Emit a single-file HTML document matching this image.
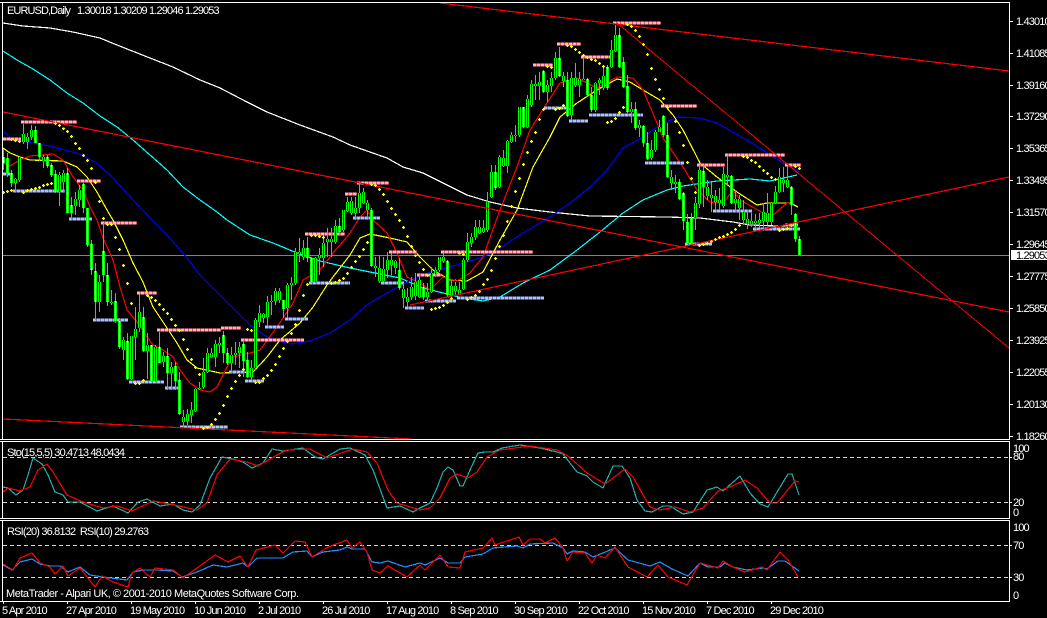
<!DOCTYPE html>
<html><head><meta charset="utf-8"><title>EURUSD,Daily</title>
<style>
html,body{margin:0;padding:0;background:#000;overflow:hidden}
svg{display:block}
text{font-family:"Liberation Sans",sans-serif;font-size:11px;fill:#fff;letter-spacing:-.85px}
.l{fill:none;stroke-width:1.2;shape-rendering:crispEdges;stroke-linejoin:round}
</style></head><body>
<svg width="1047" height="618" viewBox="0 0 1047 618" xmlns="http://www.w3.org/2000/svg">
<defs>
<clipPath id="m"><rect x="3" y="3" width="1006" height="436"/></clipPath>
<path id="bd" d="M3 157V163M7 158V173M11 173V183M35 130V143M39 143V157M47 157V166M51 165V175M55 174V192M67 173V213M71 205V213M83 184V208M87 208V245M91 244V270M95 271V302M103 251V275M107 275V302M115 301V321M119 321V347M127 341V379M143 317V351M151 345V381M159 347V363M167 356V373M175 366V381M179 380V414M223 335V353M227 353V363M243 344V361M247 360V377M283 300V309M307 248V258M311 258V282M339 226V232M371 210V266M399 270V288M423 287V297M447 261V295M495 172V188M523 107V127M543 71V92M559 58V76M567 80V116M587 79V95M591 95V110M607 67V88M619 35V67M623 62V87M627 86V112M635 109V128M643 126V143M647 143V159M663 116V135M667 135V177M679 182V199M683 193V221M687 222V243M691 218V243M703 171V187M731 176V203M791 187V205M795 214V239M799 239V255"/>
<path id="bu" d="M15 179V183M19 157V180M23 134V142M27 137V142M31 130V137M43 157V161M59 175V192M63 173V182M75 199V206M79 190V200M99 282V302M111 302V303M123 340V350M131 336V379M135 329V337M139 312V328M147 345V351M155 347V381M163 356V362M171 367V373M183 417V422M187 414V421M191 410V415M195 389V411M199 388V389M203 372V387M207 353V372M211 353V357M215 344V357M219 343V345M231 355V363M235 353V355M239 347V353M251 368V377M255 320V368M259 313V322M263 314V318M267 302V317M271 301V302M275 291V301M279 291V300M287 285V308M291 283V285M295 252V283M299 252V254M303 248V257M315 258V282M319 255V258M323 243V258M327 239V242M331 239V242M335 226V242M343 210V230M347 202V211M351 201V213M355 208V213M359 193V208M363 192V203M367 203V210M375 266V268M379 268V281M383 269V281M387 260V270M391 260V265M395 261V268M403 289V298M407 297V302M411 287V297M415 282V296M419 280V297M427 292V297M431 273V292M435 270V274M439 257V270M443 257V261M451 286V295M455 286V291M459 290V294M463 260V289M467 242V260M471 237V243M475 227V237M479 227V233M483 228V232M487 202V230M491 172V197M499 157V187M503 158V166M507 141V166M511 135V142M515 135V136M519 107V135M527 99V127M531 84V105M535 84V86M539 82V86M547 85V92M551 78V86M555 58V78M563 76V81M571 78V115M575 78V85M579 79V85M583 79V80M595 83V110M599 80V83M603 76V88M611 50V67M615 35V51M631 109V112M639 125V128M651 150V158M655 132V150M659 127V132M671 177V183M675 182V184M695 203V218M699 170V204M707 187V196M711 195V198M715 196V202M719 200V203M723 174V206M727 175V177M735 199V203M739 199V208M743 212V220M747 219V224M751 221V224M755 221V223M759 220V223M763 212V221M767 213V222M771 203V222M775 192V203M779 177V192M783 180V183M787 180V187"/>
<path id="pk" d="M3 139H21M21 122H77M77 181H101M101 223H137M137 293H157M157 330H221M221 328H241M241 340H304M305 234H345M345 194H357M357 183H389M389 252H417M417 275H441M441 252H533M533 65H553M557 44H581M581 57H610M613 23H661M661 106H697M697 165H725M725 155H785M785 165H801M785 225H798"/>
<path id="lv" d="M3 174H10M13 191H65M69 219H92M93 320H128M129 382H164M165 388H178M180 427H228M229 372H245M245 381H264M265 327H284M285 319H308M309 283H350M353 218H380M381 283H404M405 308H424M425 301H456M457 298H544M544 108H567M569 121H588M589 115H643M645 163H684M685 244H712M713 211H752M753 229H800"/>
</defs>
<rect width="1047" height="618" fill="#000"/>

<!-- frames -->
<g fill="none" stroke="#fff" stroke-width="1" shape-rendering="crispEdges">
<path d="M0 2.5H1009.5V439.5H0M2.5 2V439"/>
<path d="M0 441.5H1009.5V518.5H0M2.5 441V518"/>
<path d="M0 520.5H1009.5V601.5H0M2.5 520V601"/>
<path d="M1009 21.5h4M1009 53.5h4M1009 85.5h4M1009 116.5h4M1009 148.5h4M1009 180.5h4M1009 212.5h4M1009 244.5h4M1009 276.5h4M1009 308.5h4M1009 340.5h4M1009 372.5h4M1009 404.5h4M1009 436.5h4M1009 457.5h3M1009 502.5h3M1009 545.5h3M1009 577.5h3"/>
<path d="M3.5 601v3M67.5 601v3M131.5 601v3M195.5 601v3M259.5 601v3M323.5 601v3M387.5 601v3M451.5 601v3M515.5 601v3M579.5 601v3M643.5 601v3M707.5 601v3M771.5 601v3"/>
</g>

<g clip-path="url(#m)">
<!-- current price line -->
<path d="M3 255.5H1009" stroke="#808080" stroke-width="1" shape-rendering="crispEdges"/>
<!-- MAs -->
<polyline class="l" stroke="#fff" points="3,23 23,26 50,28 73,32 100,38 117,45 150,58 173,67 200,80 220,88 247,102 267,112 300,125 333,137 350,145 367,151 387,158 403,167 423,173 447,185 467,195 490,202 517,208 550,212 590,216 667,217 700,218 733,222 750,225 777,226 797,226"/>
<polyline class="l" stroke="#0ff" points="3,51 17,60 33,69 50,80 67,93 83,103 100,116 117,127 133,140 150,155 167,170 183,187 200,200 217,212 227,220 250,235 273,243 297,253 320,261 350,268 370,272 400,278 423,288 443,293 463,298 483,301 500,297 523,283 550,270 577,250 600,232 623,213 643,200 667,190 683,186 717,181 750,179 770,181 797,175"/>
<polyline class="l" stroke="#0000ff" points="3,131 13,140 33,143 50,146 80,154 97,163 113,178 133,200 152,220 167,235 183,253 200,275 217,292 233,308 250,325 267,337 290,344 310,341 330,333 350,320 367,305 387,293 407,282 430,272 457,265 483,257 500,248 523,233 550,217 570,203 590,187 607,170 623,148 643,137 657,127 677,117 700,118 717,123 750,142 783,163 799,171"/>
<polyline class="l" stroke="#ff0" points="3,148 10,153 20,157 30,160 63,161 77,167 87,177 97,192 107,210 113,220 123,240 133,263 143,282 153,307 167,328 177,343 187,360 197,368 220,373 253,372 267,357 280,340 300,323 313,307 327,285 333,277 350,255 360,238 370,234 390,238 407,242 420,257 433,270 450,280 467,281 483,272 500,240 517,210 533,167 550,137 560,117 577,103 597,90 617,79 630,82 643,90 660,100 673,115 683,130 700,163 717,177 737,192 757,205 767,203 790,203 798,207"/>
<polyline class="l" stroke="#f00" points="3,163 10,166 20,160 30,156 40,155 53,154 63,160 73,177 83,190 90,207 97,220 103,238 113,260 120,287 127,310 137,322 147,337 153,345 163,350 173,357 180,370 190,383 200,390 210,392 217,387 227,367 233,357 250,353 260,350 277,327 293,303 303,280 320,270 333,253 347,237 350,233 360,217 367,210 373,220 387,233 397,253 407,277 420,283 430,290 443,277 457,281 470,273 483,257 500,210 517,167 530,130 547,103 560,83 577,78 597,88 617,77 633,78 643,90 657,123 663,138 683,167 697,190 710,202 723,203 733,190 740,200 763,213 773,215 787,203 792,202"/>
<!-- S/R bars -->
<use href="#pk" fill="none" stroke="#f0506a" stroke-width="3" shape-rendering="crispEdges"/>
<use href="#pk" fill="none" stroke="#ffb6c1" stroke-width="3" stroke-dasharray="3 1" shape-rendering="crispEdges"/>
<use href="#lv" fill="none" stroke="#6a78c8" stroke-width="3" shape-rendering="crispEdges"/>
<use href="#lv" fill="none" stroke="#b0c4ee" stroke-width="3" stroke-dasharray="3 1" shape-rendering="crispEdges"/>
<!-- candles -->
<g transform="translate(.5 0)" fill="none" shape-rendering="crispEdges">
<path stroke="#0f0" stroke-width="1" d="M3 149V170M7 153V177M11 170V187M15 178V192M19 156V182M23 124V144M27 133V149M31 125V140M35 126V143M39 143V161M43 155V168M47 155V168M51 163V177M55 170V193M59 172V206M63 170V192M67 168V213M71 197V220M75 192V215M79 185V207M83 183V213M87 208V247M91 240V275M95 263V320M99 275V312M103 223V282M107 263V306M111 290V305M115 293V323M119 318V349M123 337V360M127 333V380M131 336V380M135 307V360M139 294V332M143 307V352M147 333V379M151 345V382M155 345V382M159 332V363M163 352V367M167 348V390M171 362V390M175 362V390M179 372V415M183 410V428M187 409V425M191 402V423M195 388V412M199 382V390M203 358V389M207 348V373M211 348V358M215 340V367M219 337V353M223 331V363M227 348V365M231 347V373M235 342V365M239 342V368M243 340V377M247 352V378M251 360V380M255 318V370M259 305V327M263 313V323M267 296V326M271 295V315M275 288V305M279 288V303M283 300V318M287 283V318M291 277V300M295 248V285M299 238V262M303 240V260M307 237V262M311 257V283M315 257V283M319 248V275M323 235V267M327 228V257M331 228V257M335 220V244M339 218V235M343 210V232M347 197V212M351 197V215M355 197V220M359 183V213M363 188V204M367 200V218M371 208V267M375 257V277M379 256V283M383 257V282M387 252V278M391 253V275M395 260V274M399 258V290M403 283V308M407 288V307M411 277V300M415 273V300M419 273V298M423 283V300M427 283V302M431 267V293M435 267V277M439 257V272M443 253V263M447 260V297M451 280V300M455 282V295M459 282V295M463 258V290M467 233V262M471 233V247M475 220V240M479 220V234M483 220V233M487 192V232M491 165V198M495 165V190M499 155V188M503 150V167M507 140V173M511 132V143M515 125V142M519 107V137M523 107V128M527 95V128M531 80V107M535 75V100M539 72V100M543 70V93M547 80V102M551 72V92M555 52V80M559 47V77M563 72V87M567 72V117M571 72V120M575 63V87M579 72V97M583 57V80M587 78V97M591 87V112M595 82V112M599 78V95M603 65V90M607 65V90M611 40V68M615 25V52M619 28V68M623 57V88M627 75V113M631 102V123M635 102V130M639 120V137M643 125V147M647 132V160M651 140V160M655 130V152M659 120V132M663 115V137M667 123V178M671 170V190M675 175V193M679 179V200M683 192V230M687 214V244M691 213V244M695 197V230M699 165V208M703 165V207M707 180V200M711 182V212M715 190V210M719 188V210M723 167V208M727 155V185M731 175V204M735 190V212M739 195V220M743 200V224M747 210V229M751 213V227M755 214V229M759 213V228M763 203V229M767 193V225M771 202V225M775 186V204M779 168V193M783 167V192M787 166V188M791 186V215M795 213V242M799 236V255"/>
<use href="#bu" stroke="#0f0" stroke-width="3"/>
<use href="#bu" stroke="#000" stroke-width="1"/>
<use href="#bd" stroke="#0f0" stroke-width="3"/>
<use href="#bd" stroke="#f0fff0" stroke-width="1"/>
</g>
<!-- trendlines -->
<g fill="none" stroke="#f00" shape-rendering="crispEdges">
<path stroke-width="1.2" d="M440 3L1009 71"/>
<path stroke-width="1.2" d="M3 112L1009 312"/>
<path stroke-width="1.2" d="M410 305L1009 177"/>
<path stroke-width="1.2" d="M3 419L412 439"/>
<path stroke-width="1" d="M617 23L1009 348"/>
</g>
<!-- SAR -->
<path transform="translate(.5 .5)" fill="none" stroke="#ff0" stroke-width="2.6" stroke-linecap="round" shape-rendering="crispEdges" d="M3 192h0M7 191h0M11 190h0M11 139h0M15 140h0M19 141h0M23 192h0M27 190h0M31 189h0M35 188h0M39 187h0M43 185h0M47 184h0M51 183h0M55 123h0M59 125h0M63 128h0M67 131h0M71 136h0M75 143h0M79 148h0M83 155h0M87 160h0M91 168h0M95 182h0M99 201h0M103 218h0M107 224h0M111 224h0M115 237h0M119 249h0M123 265h0M127 283h0M131 303h0M135 383h0M139 383h0M143 380h0M147 295h0M151 297h0M155 300h0M159 304h0M163 309h0M167 313h0M171 319h0M175 325h0M179 330h0M183 339h0M187 349h0M191 359h0M195 367h0M199 374h0M203 428h0M207 427h0M211 424h0M215 419h0M219 413h0M223 405h0M227 396h0M231 388h0M235 381h0M239 375h0M243 369h0M247 329h0M251 330h0M255 382h0M259 382h0M263 378h0M267 375h0M271 370h0M275 364h0M279 356h0M283 348h0M287 341h0M291 333h0M295 324h0M299 310h0M303 295h0M307 284h0M311 235h0M315 235h0M319 236h0M323 237h0M327 283h0M331 283h0M335 282h0M339 280h0M343 278h0M347 273h0M351 267h0M355 261h0M359 256h0M363 249h0M367 242h0M371 184h0M375 185h0M379 189h0M383 194h0M387 201h0M391 208h0M395 214h0M399 220h0M403 227h0M407 236h0M411 246h0M415 255h0M419 262h0M423 269h0M427 275h0M431 309h0M435 308h0M439 307h0M443 305h0M447 302h0M451 298h0M459 253h0M463 254h0M467 299h0M471 297h0M475 295h0M479 291h0M483 284h0M487 279h0M491 270h0M495 258h0M499 246h0M503 235h0M507 221h0M511 206h0M515 191h0M519 178h0M523 164h0M527 152h0M531 141h0M535 132h0M539 119h0M543 109h0M547 66h0M551 67h0M555 109h0M559 108h0M563 105h0M567 45h0M571 46h0M575 49h0M579 52h0M583 55h0M587 57h0M591 59h0M595 60h0M599 63h0M603 66h0M607 122h0M611 121h0M615 118h0M619 112h0M623 107h0M627 24h0M631 26h0M635 30h0M639 36h0M643 44h0M647 54h0M651 68h0M655 79h0M659 89h0M663 98h0M667 107h0M675 121h0M679 132h0M683 145h0M687 162h0M691 178h0M695 192h0M699 245h0M703 244h0M707 243h0M711 241h0M715 239h0M719 237h0M723 236h0M727 234h0M731 232h0M735 229h0M739 225h0M743 156h0M747 157h0M751 160h0M755 162h0M759 166h0M763 170h0M767 173h0M771 177h0M775 179h0M779 230h0M783 229h0M787 228h0M791 225h0M795 166h0M799 168h0"/>
</g>

<!-- indicator levels -->
<g stroke="#d8d8d8" stroke-width="1" stroke-dasharray="4 3" shape-rendering="crispEdges">
<path d="M3 457.5H1009M3 502.5H1009M3 545.5H1009M3 577.5H1009"/>
</g>
<!-- Stochastic -->
<polyline class="l" stroke="#20b2aa" points="3,487 8,488 16,495 23,490 28,475 33,458 42,464 48,475 55,492 63,495 68,502 80,502 97,511 113,506 128,513 138,502 147,499 160,506 173,504 183,510 192,512 200,505 210,478 222,457 233,459 243,462 252,468 263,463 272,449 283,451 303,448 315,457 323,459 340,449 350,448 365,455 373,470 387,508 400,506 413,512 420,508 430,503 437,488 443,472 448,467 453,470 460,486 463,486 470,470 478,453 485,452 493,452 502,448 520,445 540,448 557,452 563,454 577,472 587,476 593,482 603,488 613,466 622,466 630,478 637,500 645,511 652,512 663,506 670,506 683,514 693,512 707,490 717,487 723,491 740,476 750,493 760,504 768,507 788,474 792,474 799,495"/>
<polyline class="l" stroke="#f00" points="3,492 8,488 20,491 30,487 38,470 47,464 53,472 67,495 83,502 103,508 117,506 132,511 153,501 170,504 197,510 207,503 217,475 230,459 247,462 258,466 277,455 287,450 310,449 327,458 353,449 367,452 377,463 388,490 397,503 420,510 430,508 440,498 450,478 457,474 468,478 477,472 487,457 500,450 530,446 557,450 568,456 587,473 605,484 625,469 633,477 650,507 660,510 675,507 690,512 703,508 718,491 730,487 745,480 757,488 770,503 777,503 795,481 799,482"/>
<!-- RSI -->
<polyline class="l" stroke="#1e90ff" points="3,565 12,570 20,562 32,559 40,564 50,566 60,566 68,572 80,567 90,575 103,577 127,580 133,572 143,570 157,570 173,571 182,577 197,572 213,565 227,567 243,563 248,567 257,558 283,558 293,552 307,551 312,557 323,552 340,550 347,547 352,549 365,549 372,562 380,563 388,561 405,567 420,563 425,565 440,558 448,563 460,563 465,557 483,554 493,548 517,546 523,548 530,544 553,543 563,548 567,554 573,551 585,552 593,557 603,553 615,548 628,560 650,566 660,562 672,569 688,576 700,563 708,567 720,567 725,563 733,567 747,570 763,568 767,569 778,561 785,561 799,571"/>
<polyline class="l" stroke="#f00" points="3,564 13,570 20,558 32,553 40,563 50,567 55,574 63,566 68,576 80,568 95,587 102,576 113,582 128,587 132,573 140,568 150,577 155,568 173,570 183,578 197,568 215,555 228,562 240,556 248,567 256,550 275,545 283,553 295,541 305,542 312,557 328,547 347,540 352,548 360,542 367,552 372,570 380,573 388,566 407,577 420,565 425,570 440,555 448,567 460,568 465,552 483,548 492,538 495,545 507,541 519,537 523,545 530,539 540,539 545,543 555,538 563,548 567,561 573,552 585,553 592,563 597,555 605,558 615,547 628,567 647,577 658,565 668,577 687,585 700,563 718,568 723,561 733,567 745,572 762,567 767,570 780,552 788,560 798,577"/>

<!-- text -->
<text x="7" y="14" textLength="64" lengthAdjust="spacing" style="letter-spacing:0">EURUSD,Daily</text>
<text x="77" y="14">1.30018</text><text x="113" y="14">1.30209</text><text x="149" y="14">1.29046</text><text x="185" y="14">1.29053</text>
<text x="7" y="456" textLength="118" lengthAdjust="spacing" style="letter-spacing:0">Sto(15,5,5) 30.4713 48.0434</text>
<text x="7" y="535" textLength="142" lengthAdjust="spacing" style="letter-spacing:0">RSI(20) 36.8132&#160; RSI(10) 29.2763</text>
<text x="6" y="597" textLength="293" lengthAdjust="spacing" style="letter-spacing:0">MetaTrader - Alpari UK, © 2001-2010 MetaQuotes Software Corp.</text>

<g>
<text x="1016" y="25">1.43010</text><text x="1016" y="57">1.41085</text><text x="1016" y="89">1.39160</text><text x="1016" y="120">1.37290</text><text x="1016" y="152">1.35365</text><text x="1016" y="184">1.33495</text><text x="1016" y="216">1.31570</text><text x="1016" y="248">1.29645</text><text x="1016" y="280">1.27775</text><text x="1016" y="312">1.25850</text><text x="1016" y="344">1.23925</text><text x="1016" y="376">1.22055</text><text x="1016" y="408">1.20130</text><text x="1016" y="440">1.18260</text>
<rect x="1011" y="250" width="36" height="10" fill="#fff"/>
<text x="1016" y="259" style="fill:#000">1.29053</text>
<text x="1013" y="452">100</text><text x="1013" y="460">80</text><text x="1013" y="506">20</text><text x="1013" y="516">0</text>
<text x="1013" y="531">100</text><text x="1013" y="549">70</text><text x="1013" y="581">30</text><text x="1013" y="599">0</text>
</g>
<g>
<text x="2" y="614">5 Apr 2010</text><text x="66" y="614">27 Apr 2010</text><text x="130" y="614">19 May 2010</text><text x="194" y="614">10 Jun 2010</text><text x="258" y="614">2 Jul 2010</text><text x="322" y="614">26 Jul 2010</text><text x="386" y="614">17 Aug 2010</text><text x="450" y="614">8 Sep 2010</text><text x="514" y="614">30 Sep 2010</text><text x="578" y="614">22 Oct 2010</text><text x="642" y="614">15 Nov 2010</text><text x="706" y="614">7 Dec 2010</text><text x="770" y="614">29 Dec 2010</text>
</g>
</svg>
</body></html>
